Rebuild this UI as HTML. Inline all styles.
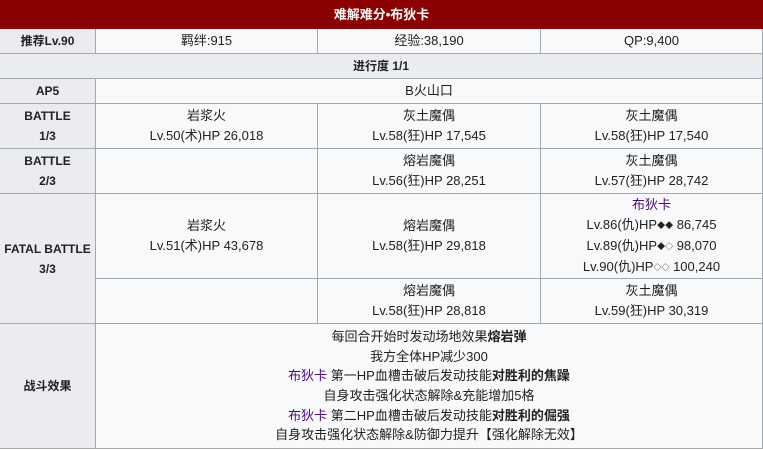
<!DOCTYPE html><html><head><meta charset="utf-8"><style>
*{margin:0;padding:0;box-sizing:border-box}
body{width:763px;height:450px;background:#fff;font-family:"Liberation Sans","Noto Sans CJK SC",sans-serif;font-size:13px;color:#202122;position:relative;overflow:hidden}
.c{position:absolute;display:flex;flex-direction:column;align-items:center;justify-content:center;text-align:center;border-right:1px solid #a2a9b1;border-bottom:1px solid #a2a9b1;background:#f8f9fa;line-height:20px}
.h{background:#eaecf0;font-weight:bold;font-size:12px}
.p{color:#4b0a7c}
.d{font-size:8px;vertical-align:1px}
b{font-weight:bold}
</style></head><body>
<div class="c" style="left:0;top:0;width:763px;height:29px;background:#8b0000;color:#fff;font-weight:bold;font-size:13px;border:none">难解难分•布狄卡</div>
<div class="c h" style="left:0;top:29px;width:96px;height:25px">推荐Lv.90</div>
<div class="c" style="left:96px;top:29px;width:222px;height:25px">羁绊:915</div>
<div class="c" style="left:318px;top:29px;width:223px;height:25px">经验:38,190</div>
<div class="c" style="left:541px;top:29px;width:222px;height:25px">QP:9,400</div>
<div class="c h" style="left:0;top:54px;width:763px;height:25px">进行度 1/1</div>
<div class="c h" style="left:0;top:79px;width:96px;height:25px">AP5</div>
<div class="c" style="left:96px;top:79px;width:667px;height:25px">B火山口</div>
<div class="c h" style="left:0;top:104px;width:96px;height:45px"><div>BATTLE<br>1/3</div></div>
<div class="c" style="left:96px;top:104px;width:222px;height:45px"><div>岩浆火<br>Lv.50(术)HP 26,018</div></div>
<div class="c" style="left:318px;top:104px;width:223px;height:45px"><div>灰土魔偶<br>Lv.58(狂)HP 17,545</div></div>
<div class="c" style="left:541px;top:104px;width:222px;height:45px"><div>灰土魔偶<br>Lv.58(狂)HP 17,540</div></div>
<div class="c h" style="left:0;top:149px;width:96px;height:45px"><div>BATTLE<br>2/3</div></div>
<div class="c" style="left:96px;top:149px;width:222px;height:45px"></div>
<div class="c" style="left:318px;top:149px;width:223px;height:45px"><div>熔岩魔偶<br>Lv.56(狂)HP 28,251</div></div>
<div class="c" style="left:541px;top:149px;width:222px;height:45px"><div>灰土魔偶<br>Lv.57(狂)HP 28,742</div></div>
<div class="c h" style="left:0;top:194px;width:96px;height:130px"><div>FATAL BATTLE<br>3/3</div></div>
<div class="c" style="left:96px;top:194px;width:222px;height:85px"><div>岩浆火<br>Lv.51(术)HP 43,678</div></div>
<div class="c" style="left:318px;top:194px;width:223px;height:85px"><div>熔岩魔偶<br>Lv.58(狂)HP 29,818</div></div>
<div class="c" style="left:541px;top:194px;width:222px;height:85px"><div><span class="p">布狄卡</span><br>Lv.86(仇)HP<span class="d">◆◆</span> 86,745<br>Lv.89(仇)HP<span class="d">◆◇</span> 98,070<br>Lv.90(仇)HP<span class="d">◇◇</span> 100,240</div></div>
<div class="c" style="left:96px;top:279px;width:222px;height:45px"></div>
<div class="c" style="left:318px;top:279px;width:223px;height:45px"><div>熔岩魔偶<br>Lv.58(狂)HP 28,818</div></div>
<div class="c" style="left:541px;top:279px;width:222px;height:45px"><div>灰土魔偶<br>Lv.59(狂)HP 30,319</div></div>
<div class="c h" style="left:0;top:324px;width:96px;height:125px">战斗效果</div>
<div class="c" style="left:96px;top:324px;width:667px;height:125px;line-height:19.7px">
<div>每回合开始时发动场地效果<b>熔岩弹</b></div>
<div>我方全体HP减少300</div>
<div><span class="p">布狄卡</span> 第一HP血槽击破后发动技能<b>对胜利的焦躁</b></div>
<div>自身攻击强化状态解除&amp;充能增加5格</div>
<div><span class="p">布狄卡</span> 第二HP血槽击破后发动技能<b>对胜利的倔强</b></div>
<div>自身攻击强化状态解除&amp;防御力提升【强化解除无效】</div>
</div>
</body></html>
